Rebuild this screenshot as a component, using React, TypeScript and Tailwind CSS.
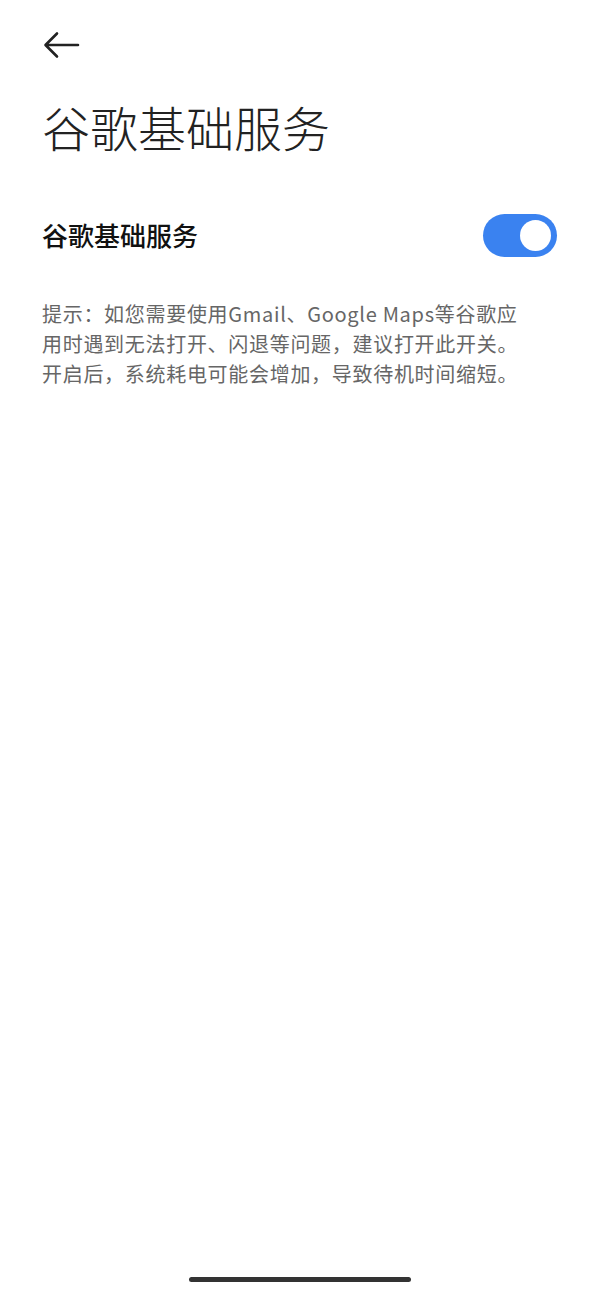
import React from "react";

export default function App() {
  return (
    <div
      className="relative w-[600px] h-[1292px] bg-white overflow-hidden"
      style={{ fontFamily: '"Noto Sans CJK SC", "Noto Sans", sans-serif' }}
    >
      <div className="pl-[42px] pr-[43px]">
        <div className="pt-[30px] h-[66px]">
          <svg width="38" height="30" viewBox="0 0 38 30" fill="none">
            <path d="M36 15H4M15 3.5L3.5 15L15 26.5" stroke="#222" strokeWidth="2.6" strokeLinecap="round" strokeLinejoin="round" />
          </svg>
        </div>
        <h1 className="mt-[28px] text-[48px] leading-[64px] font-light text-[#222]">谷歌基础服务</h1>
        <div className="mt-[55px] flex items-center justify-between h-[44px]">
          <span className="text-[26px] font-medium text-[#111] leading-[44px]">谷歌基础服务</span>
          <div className="w-[74px] h-[43px] rounded-full bg-[#3a82f0] flex items-center justify-end pr-[6px]">
            <div className="w-[31px] h-[31px] rounded-full bg-white" />
          </div>
        </div>
        <p className="mt-[42px] text-[20px] leading-[30px] text-[#666] whitespace-nowrap tracking-[0.7px]">
          提示：如您需要使用Gmail、Google Maps等谷歌应
          <br />
          用时遇到无法打开、闪退等问题，建议打开此开关。
          <br />
          开启后，系统耗电可能会增加，导致待机时间缩短。
        </p>
      </div>
      <div className="absolute left-[189px] top-[1277px] w-[222px] h-[5px] rounded-full bg-[#333]" />
    </div>
  );
}
